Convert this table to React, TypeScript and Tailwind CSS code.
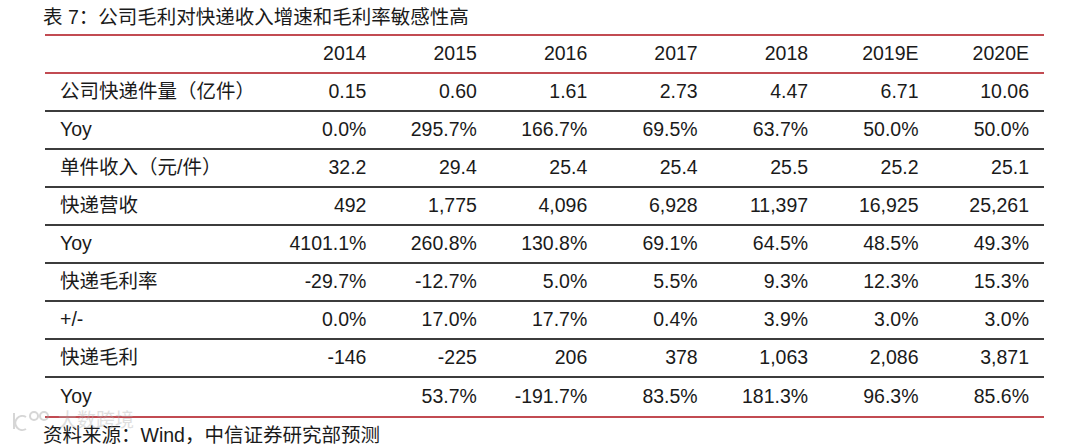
import React from "react";

const years = ["2014", "2015", "2016", "2017", "2018", "2019E", "2020E"];

const rows: [string, string[]][] = [
  ["公司快递件量（亿件）", ["0.15", "0.60", "1.61", "2.73", "4.47", "6.71", "10.06"]],
  ["Yoy", ["0.0%", "295.7%", "166.7%", "69.5%", "63.7%", "50.0%", "50.0%"]],
  ["单件收入（元/件）", ["32.2", "29.4", "25.4", "25.4", "25.5", "25.2", "25.1"]],
  ["快递营收", ["492", "1,775", "4,096", "6,928", "11,397", "16,925", "25,261"]],
  ["Yoy", ["4101.1%", "260.8%", "130.8%", "69.1%", "64.5%", "48.5%", "49.3%"]],
  ["快递毛利率", ["-29.7%", "-12.7%", "5.0%", "5.5%", "9.3%", "12.3%", "15.3%"]],
  ["+/-", ["0.0%", "17.0%", "17.7%", "0.4%", "3.9%", "3.0%", "3.0%"]],
  ["快递毛利", ["-146", "-225", "206", "378", "1,063", "2,086", "3,871"]],
  ["Yoy", ["", "53.7%", "-191.7%", "83.5%", "181.3%", "96.3%", "85.6%"]],
];

const font = { fontFamily: '"Liberation Sans", Arial, "Noto Sans CJK SC", sans-serif' };

const App: React.FC = () => {
  return (
    <div className="relative w-[1080px] h-[446px] bg-white text-[#1a1a1a] text-[19.5px]" style={font}>
      <div className="h-[34px] flex items-center pl-[43px] pt-[1px]">表 7：公司毛利对快递收入增速和毛利率敏感性高</div>

      <div className="ml-[45px] w-[999px] border-t-2 border-b-2 border-[#c24b52]">
        <div className="grid grid-cols-[226px_repeat(7,1fr)] h-[38px] items-center border-b-2 border-[#c24b52]">
          <div />
          {years.map((y) => (
            <div key={y} className="text-right pr-[15px]">{y}</div>
          ))}
        </div>
        {rows.map(([label, vals], i) => (
          <div
            key={i}
            className={
              "grid grid-cols-[226px_repeat(7,1fr)] h-[38px] items-center " +
              (i < rows.length - 1 ? "border-b-2 border-[#3c3c3c]" : "")
            }
          >
            <div className="pl-[15px]">{label}</div>
            {vals.map((v, j) => (
              <div key={j} className="text-right pr-[15px]">{v}</div>
            ))}
          </div>
        ))}
      </div>

      <div className="h-[36px] flex items-center pl-[43px]">资料来源：Wind，中信证券研究部预测</div>

      {/* faint watermark */}
      <div className="absolute left-[8px] top-[407px] flex items-center gap-[4px] opacity-40 pointer-events-none">
        <svg width="46" height="24" viewBox="0 0 46 24" fill="none" stroke="#9a9a9a" strokeWidth="2">
          <path d="M6 4 L6 20" />
          <path d="M18 8 A7 7 0 1 0 18 20" />
          <circle cx="26" cy="7" r="4" />
          <circle cx="36" cy="7" r="4" />
        </svg>
        <span className="text-[19px] text-[#b0b0b0]">大数跨境</span>
      </div>
    </div>
  );
};

export default App;
